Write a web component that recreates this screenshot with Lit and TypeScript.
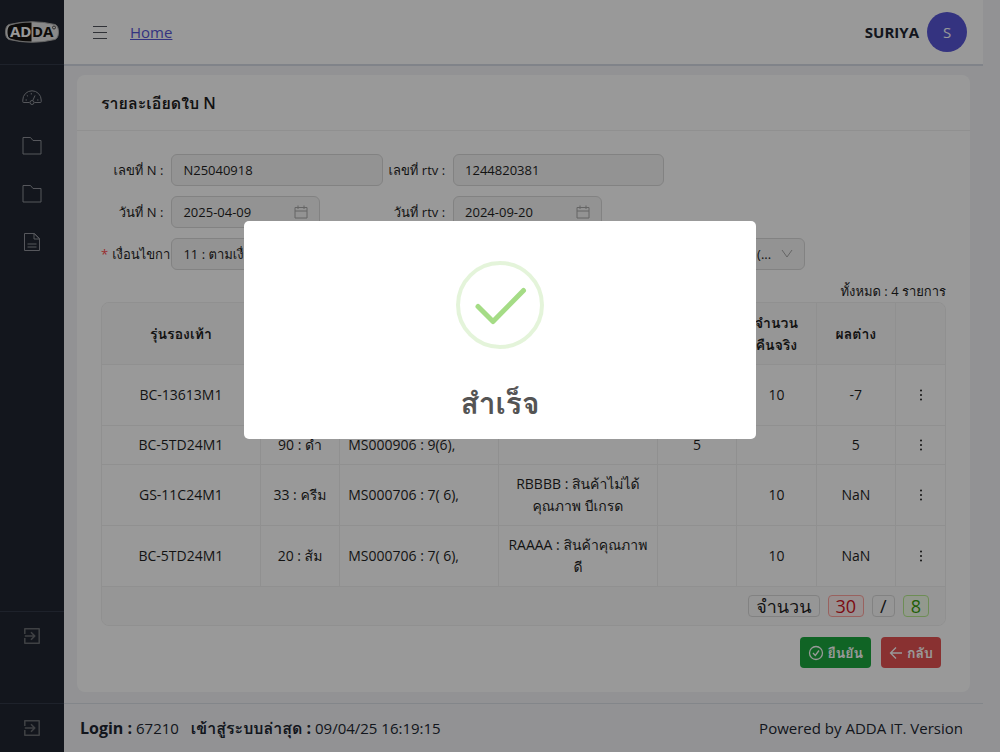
import { LitElement, html, svg, css, nothing } from "lit";
import { customElement, state } from "lit/decorators.js";
import { classMap } from "lit/directives/class-map.js";

interface Row {
  model: string;
  color: string;
  detail: string;
  reason: string;
  sent: string;
  real: string;
  diff: string;
  tall?: boolean;
}

const ROWS: Row[] = [
  { model: "BC-13613M1", color: "", detail: "", reason: "", sent: "", real: "10", diff: "-7", tall: true },
  { model: "BC-5TD24M1", color: "90 : ดำ", detail: "MS000906 : 9(6),", reason: "", sent: "5", real: "", diff: "5" },
  { model: "GS-11C24M1", color: "33 : ครีม", detail: "MS000706 : 7( 6),", reason: "RBBBB : สินค้าไม่ได้ คุณภาพ บีเกรด", sent: "", real: "10", diff: "NaN", tall: true },
  { model: "BC-5TD24M1", color: "20 : ส้ม", detail: "MS000706 : 7( 6),", reason: "RAAAA : สินค้าคุณภาพ ดี", sent: "", real: "10", diff: "NaN", tall: true },
];

const folder = svg`<path d="M1 1.500h7.500l2.500 3H19V18H1z"/>`;
const gauge = svg`<path d="M7.500 14.500H1.500a.7.7 0 0 1-.7-.7V12a9.200 9.200 0 0 1 18.400 0v1.800a.7.7 0 0 1-.7.7h-6"/><circle cx="10" cy="14.500" r="2"/><path d="M10.800 12.500l2.200-5M3.500 12h1.500M4.800 7.300l1.200 1M9.300 5v1.500M15 12h1.500"/>`;
const file = svg`<path d="M2.500 1.500h10l5 5v12h-15zM12 1.500V7h5.500z"/><path d="M5.500 12h9M5.500 15h9"/>`;
const exit = svg`<path stroke-width="1.500" stroke-linejoin="round" d="M2.800 8V2.800h14.400v14.400H2.800V12M2.800 10h10M9 6.200l3.800 3.800L9 13.800"/>`;

@customElement("app-root")
export class AppRoot extends LitElement {
  @state() private dialogOpen = true;

  static styles = css`
    :host {
      display: flex;
      min-height: 100vh;
      background: #f3f4f7;
      color: #212631;
      font-family: "Open Sans", "Noto Sans", "Loma", "Noto Sans Thai", sans-serif;
      font-size: 16px;
      line-height: 24px;
    }
    *, *::before, *::after { box-sizing: border-box; }
    svg { display: block; fill: none; stroke: currentColor; }

    .sidebar {
      flex: none;
      width: 64px;
      display: flex;
      flex-direction: column;
      background: #212631;
      color: #8f9299;
    }
    .brand { height: 65px; display: grid; place-items: center; border-bottom: 1px solid #323a49; }
    .brand text { font: bold 15px "Open Sans", sans-serif; stroke: none; }
    .nav { flex: 1; display: flex; flex-direction: column; padding-top: 9px; }
    .nav a { height: 48px; display: grid; place-items: center; color: inherit; }
    .side-end { height: 92px; border-top: 1px solid #323a49; color: #6a6d72; }
    .side-toggle { height: 49px; border-top: 1px solid #323a49; color: #6a6d72; }
    .side-end button, .side-toggle button {
      width: 100%; height: 48px; display: grid; place-items: center;
      padding: 0; border: 0; background: none; color: inherit;
    }

    .page { flex: 1; min-width: 0; display: flex; flex-direction: column; padding-right: 17px; }
    .header {
      height: 66px;
      display: flex;
      align-items: center;
      gap: 22px;
      padding: 0 16px 0 28px;
      background: #fff;
      border-bottom: 2px solid #d5dbe5;
    }
    .menu { padding: 0; border: 0; background: none; color: #50545c; }
    .home { color: #5856d6; font-size: 15px; }
    .user { margin-left: auto; display: flex; align-items: center; gap: 8px; font-weight: 700; font-size: 15px; }
    .avatar {
      width: 40px; height: 40px; border-radius: 50%;
      display: grid; place-items: center;
      background: #5856d6; color: #fff; font-weight: 400; font-size: 15px;
    }

    .content { flex: 1; padding: 9px 13px 11px; }
    .card { background: #fff; border-radius: 8px; color: #1f1f1f; font-size: 14px; line-height: 22px; }
    .card-head { margin: 0; height: 56px; padding: 0 24px; font-size: 16px; font-weight: 600; line-height: 56px; border-bottom: 1px solid #f0f0f0; }
    .card-body { padding: 23px 24px 24px; }

    .form { display: grid; grid-template-columns: repeat(3, 1fr); row-gap: 10px; }
    .field { display: grid; grid-template-columns: minmax(0, 1fr) minmax(0, 3fr); align-items: center; min-width: 0; }
    .field.first { grid-column: 1; }
    .field.wide { grid-column: 2 / 4; grid-template-columns: 1fr 5fr 2fr; }
    .field label { white-space: nowrap; text-align: right; padding-right: 8px; font-size: 13px; }
    .field.required label { text-align: left; padding-right: 0; }
    .star { color: #ff4d4f; padding-right: 4px; }
    .box {
      height: 32px;
      min-width: 0;
      display: flex;
      align-items: center;
      border: 1px solid #d9d9d9;
      border-radius: 6px;
      background: #f5f5f5;
      color: #1f1f1f;
    }
    .box.date { width: 149px; }
    .box svg { flex: none; margin-right: 11px; color: #a8a8a8; }
    input, select, button { font: inherit; }
    .box input, .box select {
      flex: 1; min-width: 0; width: 100%; height: 30px; padding: 0 11px;
      border: 0; background: none; color: inherit; appearance: none; outline: 0;
      font-size: 13px;
    }
    .box select.end { text-align-last: right; padding-right: 10px; }

    .total { margin: 0; padding-top: 10px; text-align: right; font-size: 13px; }
    table {
      width: 100%;
      table-layout: fixed;
      border-collapse: separate;
      border-spacing: 0;
      border: 1px solid #f0f0f0;
      border-radius: 8px;
      overflow: hidden;
    }
    th, td { padding: 8px; text-align: center; vertical-align: middle; border-bottom: 1px solid #f0f0f0; border-right: 1px solid #f0f0f0; }
    th:last-child, td:last-child { border-right: 0; }
    th { height: 62px; background: #fafafa; font-weight: 600; }
    .tall td { height: 61px; }
    td.left { text-align: left; }
    .col-wide { width: 18.84%; }
    .col-mid { width: 9.42%; }
    .more { display: block; width: 14px; height: 22px; margin: 0 auto; padding: 0; border: 0; background: none; color: inherit; }
    .more svg { fill: currentColor; stroke: none; margin: auto; }
    tfoot td { background: #fafafa; border-bottom: 0; }
    .tags { display: flex; justify-content: flex-end; gap: 8px; padding-right: 8px; }
    .tag { padding: 0 7px; border: 1px solid #d9d9d9; border-radius: 4px; background: #fafafa; font-size: 18px; line-height: 20px; height: 22px; }
    .tag.red { color: #cf1322; background: #fff1f0; border-color: #ffa39e; }
    .tag.green { color: #389e0d; background: #f6ffed; border-color: #b7eb8f; }

    .actions { display: flex; justify-content: flex-end; gap: 10px; padding: 11px 5px 0 0; }
    .btn { height: 31px; display: flex; align-items: center; gap: 4px; padding: 0 8px; border: 0; border-radius: 4px; color: #fff; font-weight: 600; }
    .btn.ok { background: #1ba73f; }
    .btn.back { background: #e55353; }

    .footer {
      min-height: 49px;
      display: flex;
      align-items: center;
      justify-content: space-between;
      padding: 0 20px 0 16px;
      border-top: 1px solid #dbdfe6;
      font-size: 15px;
    }
    .footer b { font-size: 16px; }
    .footer b + span + b { padding-left: 8px; }

    .backdrop { position: fixed; inset: 0; display: grid; place-items: center; padding-bottom: 92px; background: rgba(0, 0, 0, 0.4); }
    .dialog {
      width: 512px; max-width: 90%;
      display: flex; flex-direction: column; align-items: center;
      padding: 40px 20px 12px;
      border-radius: 5px;
      background: #fff;
      color: #545454;
    }
    .dialog h2 { margin: 0; padding-top: 30px; font-size: 30px; line-height: 48px; font-weight: 700; }
  `;

  private icon(shape: unknown, size = 20) {
    return html`<svg width=${size} height=${size} viewBox="0 0 20 20" aria-hidden="true">${shape}</svg>`;
  }

  private calendar() {
    return html`<svg width="14" height="14" viewBox="0 0 14 14" aria-hidden="true"><path d="M1 2.500h12v10.500H1zM1 6h12M4 .5v3.500M10 .5v3.500" /></svg>`;
  }

  private arrowDown() {
    return html`<svg width="12" height="12" viewBox="0 0 12 12" aria-hidden="true"><path d="M1 2l5 7 5-7" /></svg>`;
  }

  private row(r: Row) {
    return html`<tr class=${classMap({ tall: !!r.tall })}>
      <td>${r.model}</td>
      <td>${r.color}</td>
      <td class="left">${r.detail}</td>
      <td>${r.reason}</td>
      <td>${r.sent}</td>
      <td>${r.real}</td>
      <td>${r.diff}</td>
      <td>
        <button class="more" aria-label="เมนู"><svg width="4" height="12" viewBox="0 0 4 12"><circle cx="2" cy="1.500" r="1" /><circle cx="2" cy="6" r="1" /><circle cx="2" cy="10.500" r="1" /></svg></button>
      </td>
    </tr>`;
  }

  private dialog() {
    return html`<div class="backdrop" @click=${() => (this.dialogOpen = false)}>
      <div class="dialog" role="dialog" aria-modal="true" aria-labelledby="done">
        <svg width="88" height="88" viewBox="0 0 88 88" aria-hidden="true">
          <circle cx="44" cy="44" r="42" stroke="#a5dc86" stroke-opacity=".3" stroke-width="4" />
          <path d="M22 45.500l15 15L67.500 29.500" stroke="#a5dc86" stroke-width="5" stroke-linecap="round" stroke-linejoin="round" />
        </svg>
        <h2 id="done">สำเร็จ</h2>
      </div>
    </div>`;
  }

  render() {
    return html`
      <aside class="sidebar">
        <div class="brand">
          <svg width="54" height="22" viewBox="0 0 54 22" role="img" aria-label="ADDA">
            <path d="M4 3.500Q27-2 50 3.500Q53.500 5 53.500 11T50 18.500Q27 24 4 18.500Q.5 17 .5 11T4 3.500z" fill="#e4e4e4" stroke="#aaa" />
            <path d="M26.500 1.500Q14 1.500 5 4.500Q2.500 6 2.500 11T5 17.500Q14 20.500 26.500 20.500z" fill="#16130f" stroke="none" />
            <text x="5" y="16" fill="#fff">AD</text>
            <text x="27" y="16" fill="#16130f">DA</text>
            <circle cx="49" cy="6.500" r="1.500" stroke="#16130f" stroke-width=".7" />
          </svg>
        </div>
        <nav class="nav">
          <a href="#dashboard" aria-label="Dashboard">${this.icon(gauge)}</a>
          <a href="#documents" aria-label="Documents">${this.icon(folder)}</a>
          <a href="#reports" aria-label="Reports">${this.icon(folder)}</a>
          <a href="#file" aria-label="File">${this.icon(file)}</a>
        </nav>
        <div class="side-end"><button aria-label="Logout">${this.icon(exit)}</button></div>
        <div class="side-toggle"><button aria-label="Exit">${this.icon(exit)}</button></div>
      </aside>

      <div class="page">
        <header class="header">
          <button class="menu" aria-label="Menu"><svg width="16" height="14" viewBox="0 0 16 14"><path d="M1 1.500h14M1 7.500h14M1 13.500h14" /></svg></button>
          <a class="home" href="#home">Home</a>
          <div class="user">SURIYA<span class="avatar">S</span></div>
        </header>

        <main class="content">
          <section class="card">
            <h1 class="card-head">รายละเอียดใบ N</h1>
            <div class="card-body">
              <form class="form">
                <div class="field first"><label for="n">เลขที่ N :</label><div class="box"><input id="n" .value=${"N25040918"} readonly /></div></div>
                <div class="field"><label for="rtv">เลขที่ rtv :</label><div class="box"><input id="rtv" .value=${"1244820381"} readonly /></div></div>
                <div class="field first"><label for="nd">วันที่ N :</label><div class="box date"><input id="nd" .value=${"2025-04-09"} readonly />${this.calendar()}</div></div>
                <div class="field"><label for="rd">วันที่ rtv :</label><div class="box date"><input id="rd" .value=${"2024-09-20"} readonly />${this.calendar()}</div></div>
                <div class="field first required">
                  <label for="cond"><span class="star">*</span>เงื่อนไขกา</label>
                  <div class="box"><select id="cond"><option>11 : ตามเงื่อนไข</option></select>${this.arrowDown()}</div>
                </div>
                <div class="field wide">
                  <span></span>
                  <div class="box"><select id="shop" class="end" aria-label="ร้านค้า"><option>(...</option></select>${this.arrowDown()}</div>
                </div>
              </form>
              <p class="total">ทั้งหมด : 4 รายการ</p>
              <table>
                <colgroup>
                  <col class="col-wide" /><col class="col-mid" /><col class="col-wide" /><col class="col-wide" />
                  <col class="col-mid" /><col class="col-mid" /><col class="col-mid" /><col />
                </colgroup>
                <thead>
                  <tr>
                    <th>รุ่นรองเท้า</th><th></th><th></th><th></th>
                    <th></th><th>จำนวน<br />คืนจริง</th><th>ผลต่าง</th><th></th>
                  </tr>
                </thead>
                <tbody>${ROWS.map((r) => this.row(r))}</tbody>
                <tfoot>
                  <tr>
                    <td colspan="8">
                      <div class="tags">
                        <span class="tag">จำนวน</span><span class="tag red">30</span><span class="tag">/</span><span class="tag green">8</span>
                      </div>
                    </td>
                  </tr>
                </tfoot>
              </table>
              <div class="actions">
                <button class="btn ok"><svg width="16" height="16" viewBox="0 0 16 16" stroke-width="1.300"><circle cx="8" cy="8" r="6.500" /><path d="M5 8l2.300 2.500L11 5.500" /></svg>ยืนยัน</button>
                <button class="btn back"><svg width="14" height="14" viewBox="0 0 14 14" stroke-width="1.300"><path d="M13 7H2M7 1.500L1.500 7 7 12.500" /></svg>กลับ</button>
              </div>
            </div>
          </section>
        </main>

        <footer class="footer">
          <div><b>Login :</b><span> 67210 </span><b>เข้าสู่ระบบล่าสุด :</b><span> 09/04/25 16:19:15</span></div>
          <div>Powered by ADDA IT. Version</div>
        </footer>
      </div>
      ${this.dialogOpen ? this.dialog() : nothing}
    `;
  }
}
